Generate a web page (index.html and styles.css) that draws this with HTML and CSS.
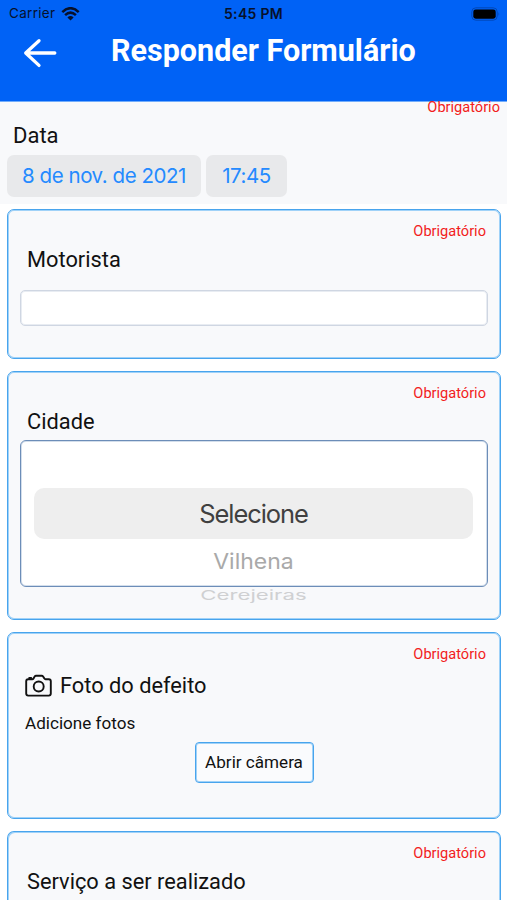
FILE: index.html
```html
<!DOCTYPE html>
<html lang="pt-BR">
<head>
<meta charset="utf-8">
<meta name="viewport" content="width=device-width, initial-scale=1">
<title>Responder Formulário</title>
<link rel="stylesheet" href="styles.css">
</head>
<body>
<header class="header">
  <div class="status">
    <div class="carrier"><span>Carrier</span>
      <svg class="wifi" width="19" height="14" viewBox="0 0 18 14"><g fill="none" stroke="#07112b" stroke-width="2.5"><path d="M.8 5.100Q9-2.700 17.200 5.100"/><path d="M3.600 8.200Q9 3.100 14.400 8.200"/></g><path d="M5.900 10.400Q9 7.700 12.100 10.400L9 13.600Z" fill="#07112b"/></svg>
    </div>
    <span class="clock">5:45 PM</span>
    <svg class="battery" width="30" height="14" viewBox="0 0 30 14"><rect x=".8" y=".8" width="25.4" height="12.4" rx="4" fill="none" stroke="#0048b8" stroke-width="1"/><rect x="2.3" y="2.4" width="22.4" height="9.3" rx="2.4" fill="#000"/><path d="M27.500 5q1.600 2 0 4z" fill="#0048b8"/></svg>
  </div>
  <div class="nav">
    <svg class="back" width="34" height="30" viewBox="0 0 34 30"><path d="M16 2.700 2.700 15 16 27.400M3 15H31.800" fill="none" stroke="#fff" stroke-width="3.300" stroke-linecap="round" stroke-linejoin="round"/></svg>
    <h1 class="title">Responder Formulário</h1>
  </div>
</header>
<main>
  <section class="date">
    <p class="required">Obrigatório</p>
    <h2 class="label">Data</h2>
    <div class="pickers"><span class="chip day">8 de nov. de 2021</span><span class="chip time">17:45</span></div>
  </section>
  <section class="card driver">
    <p class="required">Obrigatório</p>
    <h2 class="label">Motorista</h2>
    <input class="field" type="text" aria-label="Motorista">
  </section>
  <section class="card city">
    <p class="required">Obrigatório</p>
    <h2 class="label">Cidade</h2>
    <div class="wheel">
      <div class="selected">Selecione</div>
      <div class="next"><span>Vilhena</span></div>
      <div class="last"><span>Cerejeiras</span></div>
    </div>
  </section>
  <section class="card photo">
    <p class="required">Obrigatório</p>
    <h2 class="label">
      <svg class="camera" width="28" height="24" viewBox="0 0 28 24"><g fill="none" stroke="#111" stroke-width="1.900" stroke-linejoin="round" stroke-linecap="round"><path d="M3.200 5.200h4.100q.7 0 1.100-.6l1.300-2q.5-.8 1.400-.8h5.600q.9 0 1.400.8l1.300 2q.4.6 1.100.6h3.300q2 0 2 2v12.400q0 2-2 2H3.200q-2 0-2-2V7.200q0-2 2-2z"/><circle cx="13.700" cy="12.500" r="5"/><path d="M4.200 4h2"/></g></svg>
      <span>Foto do defeito</span></h2>
    <p class="hint">Adicione fotos</p>
    <button class="camera-button" type="button">Abrir câmera</button>
  </section>
  <section class="card service">
    <p class="required">Obrigatório</p>
    <h2 class="label">Serviço a ser realizado</h2>
  </section>
</main>
</body>
</html>
```
FILE: styles.css
```css
* { box-sizing: border-box; margin: 0; padding: 0; }
body { width: 507px; height: 900px; background: #fff; color: #111; font-family: Roboto, sans-serif; }
.header { height: 102px; background: #0062f6; border-bottom: 1px solid #72adfb; }
.status { height: 27px; display: grid; grid-template-columns: 1fr 1fr 1fr; align-items: center; padding: 0 6px 0 9px; font: 13.5px/27px Inter, sans-serif; color: #07112b; }
.carrier { display: flex; gap: 6px; align-items: center; letter-spacing: .3px; }
.clock { text-align: center; font-weight: 600; font-size: 14px; letter-spacing: .3px; margin-left: -3px; }
.battery { justify-self: end; }
.nav { display: flex; align-items: center; height: 46px; padding-left: 23px; }
.back { margin-top: 6px; }
.title { color: #fff; font-size: 30.5px; line-height: 45px; font-weight: 700; margin-left: 54px; white-space: nowrap; }
.required { color: #f21d1d; font-size: 14.6px; line-height: 18px; text-align: right; }
.label { font-size: 22px; line-height: 28px; font-weight: 400; white-space: nowrap; }
.date { height: 102px; background: #f8f9fb; padding: 0 7px; display: flex; flex-direction: column; }
.date .required { margin-top: -4px; }
.date .label { margin: 6px 0 5px 6px; }
.pickers { display: flex; gap: 5px; }
.chip { height: 42px; line-height: 42px; border-radius: 7px; background: #e8e9eb; color: #248aff; text-align: center; font-family: Inter, sans-serif; font-size: 20.5px; letter-spacing: -.45px; white-space: nowrap; }
.day { width: 194px; }
.time { width: 81px; }
.card { margin: 0 6px 12px 7px; border: 1px solid #48a4ed; box-shadow: inset 0 0 0 1px #a0d2f8; border-radius: 7px; background: #f8f9fb; padding: 12px 14px 0 12px; display: flex; flex-direction: column; }
.card .label { margin: 6px 0 0 7px; font-size: 21.8px; }
.driver { height: 150px; margin-top: 5px; }
.driver .field { width: 468px; height: 36px; margin-top: 16px; border: 1px solid #cfd6e2; box-shadow: inset 0 0 0 1px #e8ecf2; border-radius: 5px; background: #fff; }
.city { height: 249px; }
.wheel { width: 468px; height: 147px; margin-top: 4px; border: 1px solid #6c8db8; box-shadow: inset 0 0 0 1px #d3deeb; border-radius: 6px; background: #fff; padding: 47px 14px 0 13px; font-family: Inter, sans-serif; text-align: center; }
.selected { height: 51px; line-height: 51px; font-size: 25.5px; letter-spacing: -1.1px; background: #eee; color: #404040; border-radius: 10px; }
.next { height: 45px; line-height: 45px; font-size: 23px; color: #a9a9a9; }
.next span { display: inline-block; transform: scaleY(.94); }
.last { height: 22px; line-height: 22px; font-size: 22.2px; color: #cfd0d2; }
.last span { display: inline-block; transform: scaleY(.6); }
.photo { height: 187px; }
.photo .label { display: flex; align-items: center; gap: 7px; margin: 9px 0 0 5px; }
.hint { font-size: 17.1px; line-height: 22px; margin: 12px 0 8px 5px; }
.camera-button { align-self: center; width: 119px; height: 41px; margin-left: 2px; border: 1px solid #48a4ed; box-shadow: inset 0 0 0 1px #a0d2f8; border-radius: 4px; background: #fafbfd; color: #111; font: 17.1px Roboto, sans-serif; padding-bottom: 2px; white-space: nowrap; }
.service { height: 69px; margin-bottom: 0; border-bottom: 0; border-radius: 7px 7px 0 0; box-shadow: inset 1px 1px 0 #a0d2f8, inset -1px 0 0 #a0d2f8; }
```
